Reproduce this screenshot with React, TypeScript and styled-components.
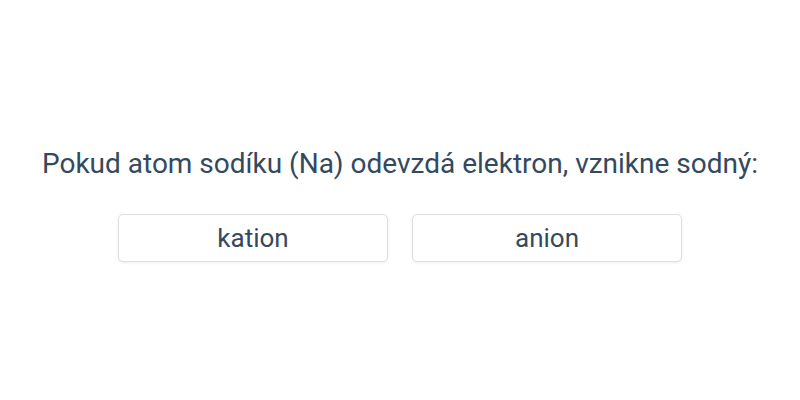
import React from "react";
import styled, { createGlobalStyle } from "styled-components";

const Global = createGlobalStyle`
  html, body { margin: 0; padding: 0; background: #fff; }
  body { font-family: Roboto, "Noto Sans", sans-serif; }
`;

const Page = styled.div`
  width: 800px;
  height: 400px;
  box-sizing: border-box;
  padding-top: 8px;
  display: flex;
  flex-direction: column;
  align-items: center;
  justify-content: center;
  color: #34495e;
`;

const Question = styled.div`
  font-size: 28px;
  line-height: 36px;
  margin-bottom: 32px;
`;

const Options = styled.div`
  display: flex;
  gap: 24px;
`;

const Option = styled.button`
  box-sizing: border-box;
  width: 270px;
  height: 48px;
  background: #fff;
  border: 1px solid #dcdfe3;
  border-radius: 5px;
  box-shadow: 0 1px 3px rgba(0, 0, 0, 0.07);
  font-family: Roboto, "Noto Sans", sans-serif;
  font-size: 26px;
  color: #34495e;
  padding: 0;
  cursor: pointer;
`;

export default function App() {
  return (
    <>
      <Global />
      <Page>
        <Question>Pokud atom sodíku (Na) odevzdá elektron, vznikne sodný:</Question>
        <Options>
          <Option>kation</Option>
          <Option>anion</Option>
        </Options>
      </Page>
    </>
  );
}
